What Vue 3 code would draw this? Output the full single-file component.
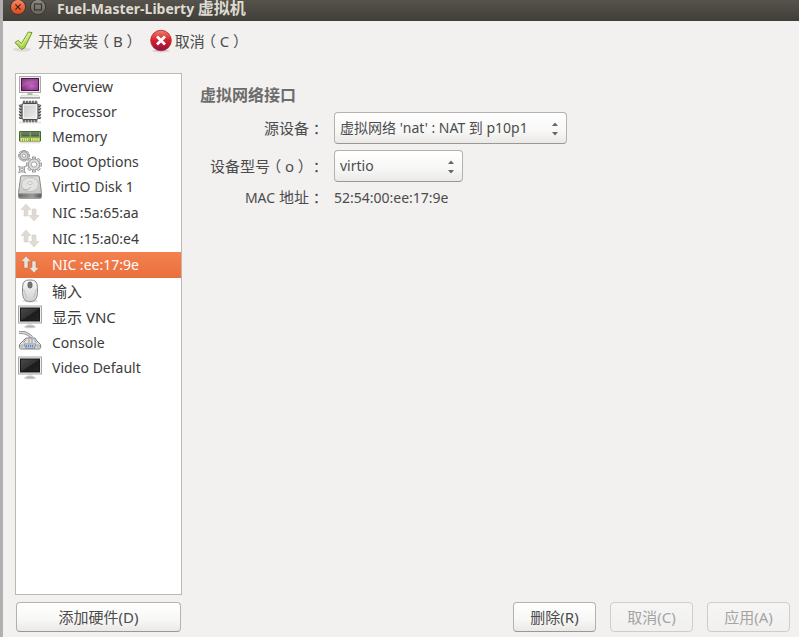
<script setup>
import { ref } from 'vue'

const devices = [
  { id: 'overview', label: 'Overview', icon: 'overview' },
  { id: 'cpu', label: 'Processor', icon: 'cpu' },
  { id: 'memory', label: 'Memory', icon: 'memory' },
  { id: 'boot', label: 'Boot Options', icon: 'gears' },
  { id: 'disk', label: 'VirtIO Disk 1', icon: 'disk', tall: true },
  { id: 'nic1', label: 'NIC :5a:65:aa', icon: 'nic', tall: true },
  { id: 'nic2', label: 'NIC :15:a0:e4', icon: 'nic', tall: true },
  { id: 'nic3', label: 'NIC :ee:17:9e', icon: 'nic', tall: true },
  { id: 'input', label: '输入', icon: 'mouse', tall: true, cjk: true },
  { id: 'vnc', label: '显示 VNC', icon: 'display', tall: true, cjk: true },
  { id: 'console', label: 'Console', icon: 'serial' },
  { id: 'video', label: 'Video Default', icon: 'display' },
]
const selected = ref('nic3')
const teeth = [0, 45, 90, 135, 180, 225, 270, 315]
const pins = [5, 8, 11, 14, 17]
</script>

<template>
  <div class="window">
    <svg class="defs" width="0" height="0" aria-hidden="true">
      <defs>
        <linearGradient id="orange" x1="0" y1="0" x2="0" y2="1"><stop offset="0" stop-color="#f58862" /><stop offset="1" stop-color="#dc461a" /></linearGradient>
        <linearGradient id="gray" x1="0" y1="0" x2="0" y2="1"><stop offset="0" stop-color="#8f8d84" /><stop offset="1" stop-color="#66645c" /></linearGradient>
        <linearGradient id="green" x1="0" y1="0" x2="0" y2="1"><stop offset="0" stop-color="#dcee84" /><stop offset="1" stop-color="#a3cc3c" /></linearGradient>
        <linearGradient id="red" x1="0" y1="0" x2="0" y2="1"><stop offset="0" stop-color="#f0806c" /><stop offset="0.5" stop-color="#d3202b" /><stop offset="1" stop-color="#8e1240" /></linearGradient>
        <radialGradient id="purple" cx="0.6" cy="0.6" r="0.8"><stop offset="0" stop-color="#c767c4" /><stop offset="1" stop-color="#6b1767" /></radialGradient>
        <linearGradient id="dark" x1="0" y1="0" x2="1" y2="1"><stop offset="0" stop-color="#4a4a4a" /><stop offset="0.5" stop-color="#333" /><stop offset="0.52" stop-color="#1c1c1c" /><stop offset="1" stop-color="#252525" /></linearGradient>
        <linearGradient id="silver" x1="0" y1="0" x2="1" y2="1"><stop offset="0" stop-color="#c6c6c5" /><stop offset="1" stop-color="#f2f2f1" /></linearGradient>
        <linearGradient id="metal" x1="0" y1="0" x2="0" y2="1"><stop offset="0" stop-color="#dededd" /><stop offset="1" stop-color="#c2c2c1" /></linearGradient>
        <linearGradient id="edge" x1="0" y1="0" x2="1" y2="0"><stop offset="0" stop-color="#6d6d6b" /><stop offset="0.6" stop-color="#9a9a98" /><stop offset="1" stop-color="#5c5c5a" /></linearGradient>
        <linearGradient id="body" x1="0" y1="0" x2="0" y2="1"><stop offset="0" stop-color="#fafafa" /><stop offset="1" stop-color="#cfcfce" /></linearGradient>
      </defs>
    </svg>

    <header class="titlebar">
      <button class="control" aria-label="关闭">
        <svg width="18" height="18" viewBox="0 0 18 18"><circle cx="9" cy="9" r="7.6" fill="url(#orange)" stroke="#38362f" /><path d="M6.4 6.4l5.2 5.2M11.6 6.4l-5.2 5.2" stroke="#4b2315" stroke-width="1.3" /></svg>
      </button>
      <button class="control" aria-label="最大化">
        <svg width="18" height="18" viewBox="0 0 18 18"><circle cx="9" cy="9" r="7.6" fill="url(#gray)" stroke="#38362f" /><rect x="5.5" y="6" width="7" height="6" fill="none" stroke="#37352f" stroke-width="1.2" /></svg>
      </button>
      <h1>Fuel-Master-Liberty <span>虚拟机</span></h1>
    </header>

    <div class="toolbar">
      <button class="tool">
        <svg width="24" height="24" viewBox="0 0 24 24"><ellipse cx="10" cy="20.500" rx="9" ry="2" fill="#dcdbd9" /><path d="M3 13.500l3.200-2.200 3.300 3.200L16.300 3l3.700.600-7.500 15.400-3 1.500z" fill="url(#green)" stroke="#6c9a2a" stroke-linejoin="round" /><path d="M4.600 13.600l1.600-1 3.500 3.600L16.900 4" fill="none" stroke="#eaf5b4" stroke-width="0.8" /></svg>
        <span>开始安装<i class="full">（</i>B<i class="full">）</i></span>
      </button>
      <button class="tool cancel">
        <svg width="24" height="24" viewBox="0 0 24 24"><ellipse cx="12" cy="22" rx="9" ry="1.5" fill="#d6d5d3" /><circle cx="12" cy="11.500" r="10.3" fill="url(#red)" stroke="#b3202e" stroke-width="0.8" /><path d="M8 7.500l8 8M16 7.500l-8 8" stroke="#fff" stroke-width="2.800" /></svg>
        <span>取消<i class="full">（</i>C<i class="full">）</i></span>
      </button>
    </div>

    <div class="content">
      <aside class="sidebar">
        <nav class="devices" aria-label="硬件">
          <button
            v-for="d in devices"
            :key="d.id"
            class="device"
            :class="{ tall: d.tall, active: selected === d.id, cjk: d.cjk }"
            @click="selected = d.id"
          >
            <svg width="24" height="24" viewBox="0 0 24 24" aria-hidden="true">
              <g v-if="d.icon === 'overview'">
                <rect x="1.5" y="1.5" width="21" height="16" fill="#eaeae8" stroke="#a9a9a7" />
                <rect x="3.500" y="3.500" width="17" height="12" fill="url(#purple)" stroke="#4e184c" />
                <path d="M4 4h16v3.500q-8 0-16 5z" fill="#fff" opacity="0.13" />
                <path d="M9.500 18h5v2h-5z" fill="#b5b5b3" /><path d="M4 20h16l2 2.500H2z" fill="#f0f0ee" stroke="#bbb" stroke-width="0.5" /><path d="M2 23h20" stroke="#777" />
              </g>
              <g v-else-if="d.icon === 'cpu'">
                <path d="M1 22.500h22" stroke="#e6e6e4" stroke-width="2" />
                <g v-for="p in pins" :key="p" fill="#fff" stroke="#3d3d3b" stroke-width="1">
                  <rect :x="p + 0.3" y="1" width="1.500" height="3" rx="0.7" /><rect :x="p + 0.3" y="19" width="1.500" height="3" rx="0.7" />
                  <rect x="1.300" :y="p" width="3" height="1.500" rx="0.7" /><rect x="19.700" :y="p" width="3" height="1.500" rx="0.7" />
                </g>
                <rect x="4" y="3.500" width="16" height="16" rx="1.500" fill="url(#silver)" stroke="#4d4d4b" />
                <rect x="5.500" y="5" width="13" height="13" fill="none" stroke="#f2f2f2" />
              </g>
              <g v-else-if="d.icon === 'memory'">
                <path d="M1.500 6.500h21V16h-21z" fill="#79a860" stroke="#3f6a2a" />
                <rect x="3.500" y="7.500" width="8" height="4" fill="#555c50" /><rect x="13" y="7.500" width="8" height="4" fill="#555c50" />
                <path d="M3.500 9h17.500" stroke="#878f80" stroke-width="0.8" />
                <path d="M2.500 14.500h9M13 14.500h9" stroke="#efe564" stroke-width="3" stroke-dasharray="1.500 0.600" />
                <path d="M2 17.800h20" stroke="#d5d5d3" />
              </g>
              <g v-else-if="d.icon === 'gears'" stroke="#8f8f8d" stroke-width="0.8" fill="#dcdcda">
                <g transform="translate(6 5.700)"><rect v-for="a in teeth" :key="a" x="-1.300" y="-5.300" width="2.600" height="4" :transform="`rotate(${a})`" /><circle r="4" /><circle r="1.700" fill="#fff" /></g>
                <g transform="translate(16 14.500)"><rect v-for="a in teeth" :key="a" x="-1.500" y="-7.500" width="3" height="4" :transform="`rotate(${a})`" /><circle r="5.600" /><circle r="2.700" fill="#fff" /></g>
                <g transform="translate(4 19.500)"><path d="M-3.500-3.500L-1.500-2.500h3l2-1-1 2v3l1 2-2-1h-3l-2 1 1-2v-3z" /><circle r="1.300" fill="#fff" /></g>
              </g>
              <g v-else-if="d.icon === 'disk'">
                <path d="M4 .8h16q1 0 1.300 1l2.200 16v4q0 1.500-1.500 1.500H2q-1.500 0-1.500-1.500v-4l2.200-16q.3-1 1.300-1z" fill="url(#metal)" stroke="#8b8b89" />
                <path d="M1 18.500h22v3.300q0 1-1 1H2q-1 0-1-1z" fill="url(#edge)" />
                <ellipse cx="12" cy="9.500" rx="8.500" ry="7" fill="#e3e3e2" stroke="#b9b9b7" stroke-width="0.8" />
                <ellipse cx="12" cy="8" rx="2.300" ry="1.500" fill="#eee" stroke="#bbb" stroke-width="0.8" /><path d="M5 14.500q6 1 8-2.500" fill="none" stroke="#aaa" stroke-width="0.8" />
              </g>
              <g v-else-if="d.icon === 'nic'" class="arrows">
                <path d="M8 3l5 5.500h-3V15H6V8.500H3z" /><path d="M14 8h4v6.500h3L16 20l-5-5.500h3z" />
              </g>
              <g v-else-if="d.icon === 'mouse'">
                <ellipse cx="12" cy="22" rx="8" ry="1.500" fill="#ddd" />
                <path d="M12 1c6 0 7.500 2 7.500 10S18 22.500 12 22.500 4.500 19 4.500 11 6 1 12 1z" fill="url(#body)" stroke="#8a8a88" />
                <path d="M5.500 10q1.500 4 3 9M18.500 10q-1.500 4-3 9" fill="none" stroke="#b5b5b3" stroke-width="0.8" /><rect x="10" y="3" width="4" height="6" rx="2" fill="#777" stroke="#555" stroke-width="0.800" />
              </g>
              <g v-else-if="d.icon === 'display'">
                <ellipse cx="12" cy="22" rx="6" ry="1.300" fill="#d2d2d0" /><path d="M9.500 18h5v3h-5z" fill="#e8e8e6" /><ellipse cx="12" cy="21.300" rx="4.500" ry="1" fill="#b4b4b2" />
                <rect x=".5" y="1" width="23" height="17" fill="#eee" stroke="#a7a7a5" />
                <rect x="2.500" y="3" width="19" height="13" fill="url(#dark)" stroke="#171717" />
              </g>
              <g v-else>
                <path d="M1 1.500c7-.5 9 1.500 13 5" fill="none" stroke="#888" stroke-width="3" /><path d="M1 1.500c7-.5 9 1.500 13 5" fill="none" stroke="#dcdcda" stroke-width="1.500" />
                <path d="M8 7h9l2 3 3.500 3.500q.8 4-1 4.500h-19q-1.800-.5-1-4.500L5 10z" fill="#e2e2e0" stroke="#7f7f7d" />
                <path d="M8 8.500L5.500 12M16 8.500l2.500 3.500M11 8v4M14 8v4" stroke="#999" fill="none" />
                <path d="M6 13h12l-1.500 4h-9z" fill="#fff" stroke="#777" stroke-width="0.8" /><path d="M7.500 15h9" stroke="#5b88c8" stroke-width="2.500" stroke-dasharray="1.500 .5" />
                <circle cx="3.800" cy="15" r="1.200" fill="#fff" stroke="#888" stroke-width=".8" /><circle cx="20.200" cy="15" r="1.200" fill="#fff" stroke="#888" stroke-width=".8" />
              </g>
            </svg>
            <span>{{ d.label }}</span>
          </button>
        </nav>
        <button class="button">添加硬件(D)</button>
      </aside>

      <main class="panel">
        <h2>虚拟网络接口</h2>
        <div class="form">
          <label for="source">源设备<i class="full">：</i></label>
          <div class="combo source">
            <select id="source"><option>虚拟网络 'nat' : NAT 到 p10p1</option></select>
            <svg width="8" height="14" viewBox="0 0 8 14"><path d="M1 4l3-3.500L7 4zM1 10l3 3.500L7 10z" fill="#666" /></svg>
          </div>
          <label for="model">设备型号<i class="full">（</i>o<i class="full">）</i><i class="full">：</i></label>
          <div class="combo model">
            <select id="model"><option>virtio</option></select>
            <svg width="8" height="14" viewBox="0 0 8 14"><path d="M1 4l3-3.500L7 4zM1 10l3 3.500L7 10z" fill="#666" /></svg>
          </div>
          <label for="mac"><small>MAC</small> 地址<i class="full">：</i></label>
          <output id="mac">52:54:00:ee:17:9e</output>
        </div>
        <footer class="actions">
          <button class="button">删除(R)</button>
          <button class="button" disabled>取消(C)</button>
          <button class="button" disabled>应用(A)</button>
        </footer>
      </main>
    </div>
  </div>
</template>

<style>
body { background: #f2f1f0; }
</style>

<style scoped>
.window {
  box-sizing: border-box;
  min-height: 100vh;
  display: flex;
  flex-direction: column;
  border-left: 3px solid #b1b0b0;
  background: #f2f1f0;
  color: #4c4c4c;
  font: 14px/20px "Noto Sans", "Noto Sans CJK SC", sans-serif;
}
.defs { position: absolute; }
button, select { font: inherit; color: inherit; }
button { border: 0; padding: 0; background: none; }
svg { display: block; flex: none; }
.titlebar {
  height: 21px;
  display: flex;
  align-items: flex-start;
  gap: 2px;
  padding-left: 6px;
  box-sizing: border-box;
  background: linear-gradient(#55534b, #403e39);
}
.control { margin-top: -2px; }
h1 {
  margin: 0 0 0 8px;
  font-size: 14px;
  line-height: 16px;
  font-weight: 700;
  color: #dfdbd2;
  white-space: nowrap;
}
h1 span { font-size: 16px; line-height: 16px; }
.toolbar { display: flex; gap: 11px; padding: 8px 9px 12px; height: 24px; }
.tool { display: flex; align-items: center; gap: 2px; font-size: 15px; line-height: 24px; white-space: nowrap; }
.full {
  display: inline-block;
  width: 15px;
  text-align: center;
  font-style: normal;
  font-family: "Noto Sans CJK SC", sans-serif;
  font-feature-settings: "halt";
}
.content { flex: 1; display: flex; gap: 18px; padding: 8px 9px 5px 12px; }
.sidebar { width: 167px; flex: none; display: flex; flex-direction: column; gap: 7px; }
.devices { flex: 1; background: #fff; border: 1px solid #bfb8b1; display: flex; flex-direction: column; }
.device {
  height: 25px;
  display: flex;
  align-items: center;
  gap: 10px;
  padding-left: 2px;
  color: #3c3c3c;
  text-align: left;
  white-space: nowrap;
}
.device.tall { height: 26px; }
.device.cjk { font-size: 15px; }
.device.active { background: linear-gradient(#f48150, #ea6f3e); color: #fff; }
.arrows { fill: #dfdbd2; stroke: #cfcac0; stroke-width: 0.5; }
.active .arrows { fill: #e9e4da; stroke: #b9684a; }
.button {
  box-sizing: border-box;
  height: 30px;
  border: 1px solid #b5b2ae;
  border-bottom-color: #9b9894;
  border-radius: 4px;
  background: linear-gradient(#fff, #f7f7f6 60%, #eae9e8);
  font-size: 15px;
}
.button:disabled { color: #a5a4a3; border-color: #cfcdca; background: linear-gradient(#f6f5f5, #f1f0ef); }
.sidebar .button { margin: 0 1px; }
.panel { flex: 1; min-width: 0; display: flex; flex-direction: column; }
h2 { margin: 12px 0 7px; font-size: 16px; line-height: 20px; font-weight: 700; color: #6c6c6c; }
.form {
  display: grid;
  grid-template-columns: 124px auto;
  justify-content: start;
  align-items: center;
  column-gap: 10px;
  row-gap: 6px;
}
.form label { text-align: right; font-size: 15px; line-height: 18px; white-space: nowrap; }
.form small { font-size: 14px; }
.form output { line-height: 18px; }
.combo { position: relative; display: flex; }
.source { width: 233px; }
.model { width: 129px; }
.combo select {
  appearance: none;
  width: 100%;
  height: 32px;
  margin: 0;
  padding: 0 20px 0 5px;
  border: 1px solid #b5b2ae;
  border-bottom-color: #9b9894;
  border-radius: 4px;
  background: linear-gradient(#fff, #f7f7f6 60%, #eae9e8);
}
.combo svg { position: absolute; right: 8px; top: 10px; pointer-events: none; }
.actions { margin-top: auto; display: flex; justify-content: flex-end; gap: 14px; }
.actions .button { width: 83px; }
</style>
